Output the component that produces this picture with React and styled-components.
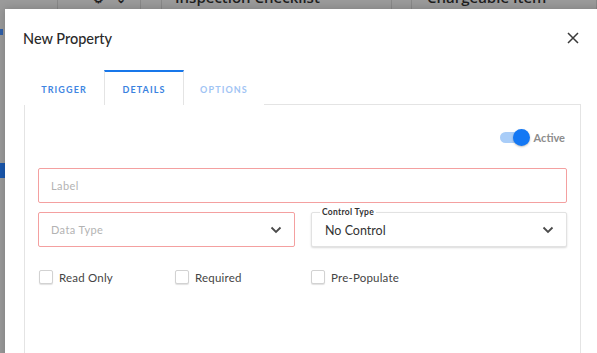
import React from "react";
import styled, { createGlobalStyle } from "styled-components";

const Global = createGlobalStyle`
  html, body { margin: 0; padding: 0; }
  body {
    background: #9a9a9a;
    overflow: hidden;
    font-family: Lato, "Noto Sans", Arial, sans-serif;
  }
  * { box-sizing: border-box; }
`;

const Page = styled.div`
  position: relative;
  width: 597px;
  height: 353px;
  overflow: hidden;
  background: #9a9a9a;
`;

const BackRow = styled.div`
  display: flex;
  height: 9px;
  overflow: hidden;
`;

const BackCell = styled.div`
  flex: 0 0 ${(p) => p.$w}px;
  border-right: 1px solid #888;
  display: flex;
  align-items: flex-end;
  padding-left: ${(p) => p.$pl || 0}px;
  gap: 12px;
  color: #1e1e1e;
  font-family: "Open Sans", Arial, sans-serif;
  font-weight: 600;
  font-size: 15px;
  line-height: 1;
  white-space: nowrap;
`;

const BackText = styled.span`
  margin-bottom: 4px;
`;

const Glyph = styled.span`
  font-size: 12px;
  margin-bottom: 4px;
`;

const LeftStrip = styled.div`
  position: absolute;
  left: 0;
  top: 9px;
  width: 5px;
  height: 344px;
  display: flex;
  flex-direction: column;
`;

const StripMark = styled.div`
  margin-top: ${(p) => p.$mt}px;
  height: ${(p) => p.$h}px;
  width: ${(p) => p.$w}px;
  background: ${(p) => p.$c};
`;

const Modal = styled.div`
  position: absolute;
  left: 5px;
  top: 9px;
  width: 597px;
  height: 360px;
  background: #fff;
  box-shadow: 0 0 8px rgba(0, 0, 0, 0.2);
  display: flex;
  flex-direction: column;
  padding: 20px 20px 0 19px;
`;

const Header = styled.div`
  display: flex;
  align-items: center;
  justify-content: space-between;
  height: 18px;
  padding-left: 0;
  padding-right: 2px;
`;

const Title = styled.h2`
  margin: 0 0 0 -1px;
  font-size: 14.5px;
  font-weight: 500;
  color: #2a2a2a;
  letter-spacing: 0;
`;

const CloseBtn = styled.button`
  border: none;
  background: none;
  padding: 0;
  width: 14px;
  height: 14px;
  display: flex;
  align-items: center;
  justify-content: center;
  cursor: pointer;
`;

const Tabs = styled.div`
  display: flex;
  margin-top: 23px;
  position: relative;
  z-index: 1;
`;

const Tab = styled.div`
  width: 80px;
  height: 35px;
  display: flex;
  align-items: center;
  justify-content: center;
  font-size: 9px;
  font-weight: 700;
  letter-spacing: 1.1px;
  color: ${(p) => (p.$active ? "#3a82e0" : p.$muted ? "#9fc4f4" : "#3f86e2")};
  border-top: 2px solid ${(p) => (p.$active ? "#1877ea" : "transparent")};
  border-left: 1px solid ${(p) => (p.$active ? "#e4e4e4" : "transparent")};
  border-right: 1px solid ${(p) => (p.$active ? "#e4e4e4" : "transparent")};
  background: #fff;
  padding-top: 1px;
  margin-bottom: -1px;
`;

const Panel = styled.div`
  flex: 1;
  width: 557px;
  border: 1px solid #e4e4e4;
  padding: 20px 13px 0 13px;
  display: flex;
  flex-direction: column;
`;

const ToggleRow = styled.div`
  display: flex;
  justify-content: flex-end;
  align-items: center;
  height: 24px;
  gap: 5px;
  padding-right: 2px;
`;

const Track = styled.div`
  position: relative;
  width: 29px;
  height: 11px;
  border-radius: 6px;
  background: #a9cdf8;
`;

const Knob = styled.div`
  position: absolute;
  right: -1px;
  top: -3px;
  width: 17px;
  height: 17px;
  border-radius: 50%;
  background: #1478f4;
  box-shadow: 0 1px 2px rgba(0, 0, 0, 0.25);
`;

const ToggleLabel = styled.span`
  font-size: 11px;
  font-weight: 700;
  color: #8c8c8c;
`;

const Field = styled.div`
  position: relative;
  height: 35px;
  display: flex;
  align-items: center;
  justify-content: space-between;
  padding: 0 12px 0 12px;
  border: 1px solid ${(p) => (p.$error ? "#f4a0a0" : "#e2e2e2")};
  border-radius: 2px;
  background: #fff;
  box-shadow: ${(p) => (p.$error ? "none" : "0 1px 2px rgba(0,0,0,0.15)")};
  flex: ${(p) => p.$flex || "none"};
`;

const Placeholder = styled.span`
  font-size: 11px;
  color: #b3b3b3;
  letter-spacing: 0.4px;
`;

const Value = styled.span`
  font-size: 12.5px;
  color: #333;
  padding-left: 1px;
  margin-top: 2px;
`;

const FloatLabel = styled.span`
  position: absolute;
  left: 8px;
  top: -6px;
  padding: 0 2px;
  background: #fff;
  font-size: 8.5px;
  font-weight: 700;
  color: #333;
  line-height: 10px;
  letter-spacing: 0.3px;
`;

const Stack = styled.div`
  display: flex;
  flex-direction: column;
  gap: 9px;
  margin-top: 19px;
`;

const Row = styled.div`
  display: flex;
  gap: 16px;
`;

const ChecksRow = styled.div`
  display: flex;
  margin-top: 23px;
  padding-left: 1px;
`;

const CheckItem = styled.label`
  width: 136px;
  display: flex;
  align-items: center;
  gap: 6px;
  font-size: 11.5px;
  color: #444;
  letter-spacing: 0.2px;
`;

const Box = styled.span`
  width: 14px;
  height: 14px;
  border: 1px solid #d2d2d2;
  border-radius: 2px;
  background: #fff;
  box-shadow: 0 1px 1px rgba(0, 0, 0, 0.12);
`;

const Chevron = () => (
  <svg width="12" height="8" viewBox="0 0 12 8">
    <polyline points="1.5,1.5 6,6 10.5,1.5" fill="none" stroke="#4a4a4a" strokeWidth="1.8" />
  </svg>
);

export default function App() {
  return (
    <>
      <Global />
      <Page>
        <BackRow>
          <BackCell $w={58} />
          <BackCell $w={83} $pl={35}>
            <Glyph>⚙</Glyph>
            <Glyph>⌄</Glyph>
          </BackCell>
          <BackCell $w={21} />
          <BackCell $w={230} $pl={13}>
            <BackText>Inspection Checklist</BackText>
          </BackCell>
          <BackCell $w={20} />
          <BackCell $w={185} $pl={15}>
            <BackText>Chargeable Item</BackText>
          </BackCell>
        </BackRow>
        <LeftStrip>
          <StripMark $mt={20} $h={6} $w={3} $c="#2f5fa8" />
          <StripMark $mt={128} $h={15} $w={5} $c="#1a57ad" />
        </LeftStrip>
        <Modal>
          <Header>
            <Title>New Property</Title>
            <CloseBtn aria-label="Close">
              <svg width="12" height="12" viewBox="0 0 12 12">
                <path d="M1 1L11 11M11 1L1 11" stroke="#3a3a3a" strokeWidth="1.5" />
              </svg>
            </CloseBtn>
          </Header>
          <Tabs>
            <Tab>TRIGGER</Tab>
            <Tab $active>DETAILS</Tab>
            <Tab $muted>OPTIONS</Tab>
          </Tabs>
          <Panel>
            <ToggleRow>
              <Track>
                <Knob />
              </Track>
              <ToggleLabel>Active</ToggleLabel>
            </ToggleRow>
            <Stack>
              <Field $error>
                <Placeholder>Label</Placeholder>
              </Field>
              <Row>
                <Field $error $flex="0 0 257px">
                  <Placeholder>Data Type</Placeholder>
                  <Chevron />
                </Field>
                <Field $flex="1">
                  <FloatLabel>Control Type</FloatLabel>
                  <Value>No Control</Value>
                  <Chevron />
                </Field>
              </Row>
            </Stack>
            <ChecksRow>
              <CheckItem>
                <Box />
                Read Only
              </CheckItem>
              <CheckItem>
                <Box />
                Required
              </CheckItem>
              <CheckItem>
                <Box />
                Pre-Populate
              </CheckItem>
            </ChecksRow>
          </Panel>
        </Modal>
      </Page>
    </>
  );
}
